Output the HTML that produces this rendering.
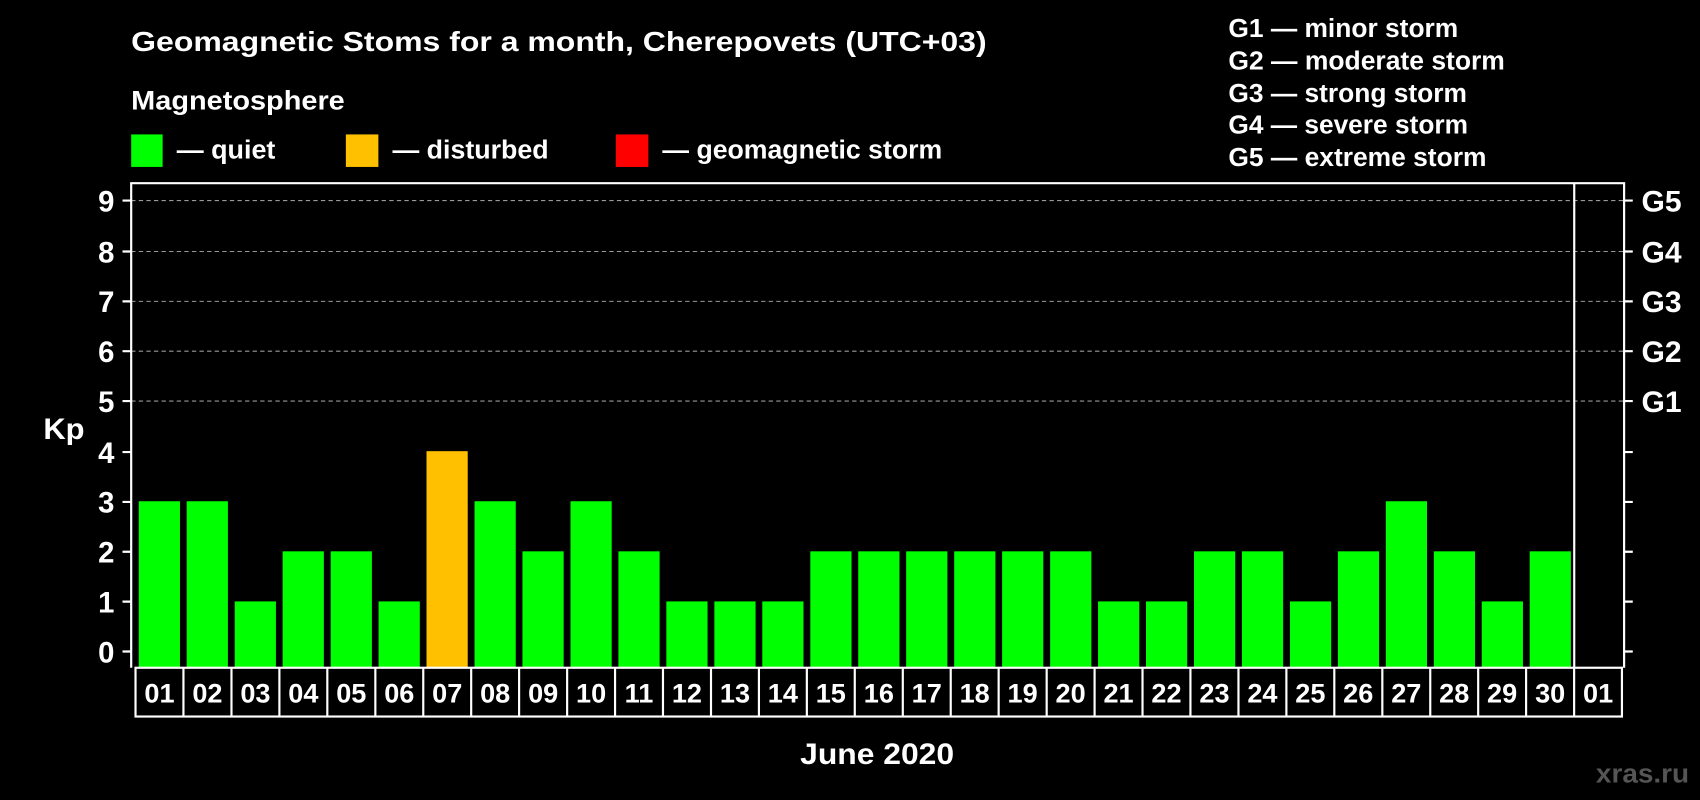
<!DOCTYPE html>
<html><head><meta charset="utf-8"><style>
html,body{margin:0;padding:0;background:#000;width:1700px;height:800px;overflow:hidden}
svg{display:block}
text{font-family:"Liberation Sans",Arial,sans-serif;font-weight:bold;fill:#fff}
</style></head><body>
<svg width="1700" height="800" viewBox="0 0 1568 738" preserveAspectRatio="none">
<rect width="1568" height="738" fill="#000"/>
<text x="121" y="47" font-size="26" textLength="789" lengthAdjust="spacingAndGlyphs">Geomagnetic Stoms for a month, Cherepovets (UTC+03)</text>
<text x="121" y="101" font-size="25" textLength="197" lengthAdjust="spacingAndGlyphs">Magnetosphere</text>
<rect x="121" y="124" width="29" height="30" fill="#00ff00"/>
<text x="163" y="146" font-size="24" textLength="91" lengthAdjust="spacingAndGlyphs">— quiet</text>
<rect x="319" y="124" width="30" height="30" fill="#ffc000"/>
<text x="362" y="146" font-size="24" textLength="144" lengthAdjust="spacingAndGlyphs">— disturbed</text>
<rect x="568" y="124" width="30" height="30" fill="#ff0000"/>
<text x="611" y="146" font-size="24" textLength="258" lengthAdjust="spacingAndGlyphs">— geomagnetic storm</text>
<g font-size="24" lengthAdjust="spacingAndGlyphs">
<text x="1133" y="34" textLength="212" lengthAdjust="spacingAndGlyphs">G1 — minor storm</text>
<text x="1133" y="64" textLength="255" lengthAdjust="spacingAndGlyphs">G2 — moderate storm</text>
<text x="1133" y="94" textLength="220" lengthAdjust="spacingAndGlyphs">G3 — strong storm</text>
<text x="1133" y="123" textLength="221" lengthAdjust="spacingAndGlyphs">G4 — severe storm</text>
<text x="1133" y="153" textLength="238" lengthAdjust="spacingAndGlyphs">G5 — extreme storm</text>
</g>
<g stroke="#999" stroke-width="1" stroke-dasharray="4,3">
<line x1="121" y1="185" x2="1498" y2="185"/>
<line x1="121" y1="232" x2="1498" y2="232"/>
<line x1="121" y1="278" x2="1498" y2="278"/>
<line x1="121" y1="324" x2="1498" y2="324"/>
<line x1="121" y1="370" x2="1498" y2="370"/>
</g>
<g fill="#00ff00">
<rect x="128" y="462.4" width="38" height="153.6"/>
<rect x="172.2" y="462.4" width="38" height="153.6"/>
<rect x="216.5" y="554.8" width="38" height="61.2"/>
<rect x="260.7" y="508.6" width="38" height="107.4"/>
<rect x="305" y="508.6" width="38" height="107.4"/>
<rect x="349.2" y="554.8" width="38" height="61.2"/>
<rect x="393.4" y="416.2" width="38" height="199.8" fill="#ffc000"/>
<rect x="437.7" y="462.4" width="38" height="153.6"/>
<rect x="481.9" y="508.6" width="38" height="107.4"/>
<rect x="526.2" y="462.4" width="38" height="153.6"/>
<rect x="570.4" y="508.6" width="38" height="107.4"/>
<rect x="614.6" y="554.8" width="38" height="61.2"/>
<rect x="658.9" y="554.8" width="38" height="61.2"/>
<rect x="703.1" y="554.8" width="38" height="61.2"/>
<rect x="747.4" y="508.6" width="38" height="107.4"/>
<rect x="791.6" y="508.6" width="38" height="107.4"/>
<rect x="835.8" y="508.6" width="38" height="107.4"/>
<rect x="880.1" y="508.6" width="38" height="107.4"/>
<rect x="924.3" y="508.6" width="38" height="107.4"/>
<rect x="968.6" y="508.6" width="38" height="107.4"/>
<rect x="1012.8" y="554.8" width="38" height="61.2"/>
<rect x="1057" y="554.8" width="38" height="61.2"/>
<rect x="1101.3" y="508.6" width="38" height="107.4"/>
<rect x="1145.5" y="508.6" width="38" height="107.4"/>
<rect x="1189.8" y="554.8" width="38" height="61.2"/>
<rect x="1234" y="508.6" width="38" height="107.4"/>
<rect x="1278.2" y="462.4" width="38" height="153.6"/>
<rect x="1322.5" y="508.6" width="38" height="107.4"/>
<rect x="1366.7" y="554.8" width="38" height="61.2"/>
<rect x="1410.9" y="508.6" width="38" height="107.4"/>
</g>
<g stroke="#fff" stroke-width="2" fill="none">
<polyline points="121,616 121,169 1498,169 1498,616"/>
<line x1="1452" y1="169" x2="1452" y2="616"/>
<path d="M113 185h8M113 232h8M113 278h8M113 324h8M113 370h8M113 417h8M113 463h8M113 509h8M113 555h8M113 601h8"/>
<path d="M1498 185h8M1498 232h8M1498 278h8M1498 324h8M1498 370h8M1498 417h8M1498 463h8M1498 509h8M1498 555h8M1498 601h8"/>
<rect x="125" y="616" width="1371" height="45"/>
<path d="M169.2 616v45M213.5 616v45M257.7 616v45M301.9 616v45M346.2 616v45M390.4 616v45M434.6 616v45M478.8 616v45M523.1 616v45M567.3 616v45M611.5 616v45M655.8 616v45M700 616v45M744.2 616v45M788.4 616v45M832.7 616v45M876.9 616v45M921.1 616v45M965.4 616v45M1009.6 616v45M1053.8 616v45M1098 616v45M1142.3 616v45M1186.5 616v45M1230.7 616v45M1275 616v45M1319.2 616v45M1363.4 616v45M1407.6 616v45M1451.9 616v45"/>
</g>
<g font-size="27" text-anchor="middle">
<text x="98" y="195">9</text><text x="98" y="242">8</text><text x="98" y="288">7</text><text x="98" y="334">6</text><text x="98" y="380">5</text><text x="98" y="427">4</text><text x="98" y="473">3</text><text x="98" y="519">2</text><text x="98" y="565">1</text><text x="98" y="611">0</text>
</g>
<text x="40" y="405" font-size="27" textLength="38" lengthAdjust="spacingAndGlyphs">Kp</text>
<g font-size="27">
<text x="1514" y="195" textLength="37" lengthAdjust="spacingAndGlyphs">G5</text><text x="1514" y="242" textLength="37" lengthAdjust="spacingAndGlyphs">G4</text><text x="1514" y="288" textLength="37" lengthAdjust="spacingAndGlyphs">G3</text><text x="1514" y="334" textLength="37" lengthAdjust="spacingAndGlyphs">G2</text><text x="1514" y="380" textLength="37" lengthAdjust="spacingAndGlyphs">G1</text>
</g>
<g font-size="25" text-anchor="middle">
<text x="147.1" y="648">01</text><text x="191.3" y="648">02</text><text x="235.6" y="648">03</text><text x="279.8" y="648">04</text><text x="324" y="648">05</text><text x="368.3" y="648">06</text><text x="412.5" y="648">07</text><text x="456.7" y="648">08</text><text x="501" y="648">09</text><text x="545.2" y="648">10</text><text x="589.4" y="648">11</text><text x="633.6" y="648">12</text><text x="677.9" y="648">13</text><text x="722.1" y="648">14</text><text x="766.3" y="648">15</text><text x="810.6" y="648">16</text><text x="854.8" y="648">17</text><text x="899" y="648">18</text><text x="943.2" y="648">19</text><text x="987.5" y="648">20</text><text x="1031.7" y="648">21</text><text x="1075.9" y="648">22</text><text x="1120.2" y="648">23</text><text x="1164.4" y="648">24</text><text x="1208.6" y="648">25</text><text x="1252.8" y="648">26</text><text x="1297.1" y="648">27</text><text x="1341.3" y="648">28</text><text x="1385.5" y="648">29</text><text x="1429.8" y="648">30</text><text x="1474" y="648">01</text>
</g>
<text x="738" y="705" font-size="27" textLength="142" lengthAdjust="spacingAndGlyphs">June 2020</text>
<text x="1472" y="722" font-size="24" textLength="86" lengthAdjust="spacingAndGlyphs" style="fill:#555">xras.ru</text>
</svg>
</body></html>
